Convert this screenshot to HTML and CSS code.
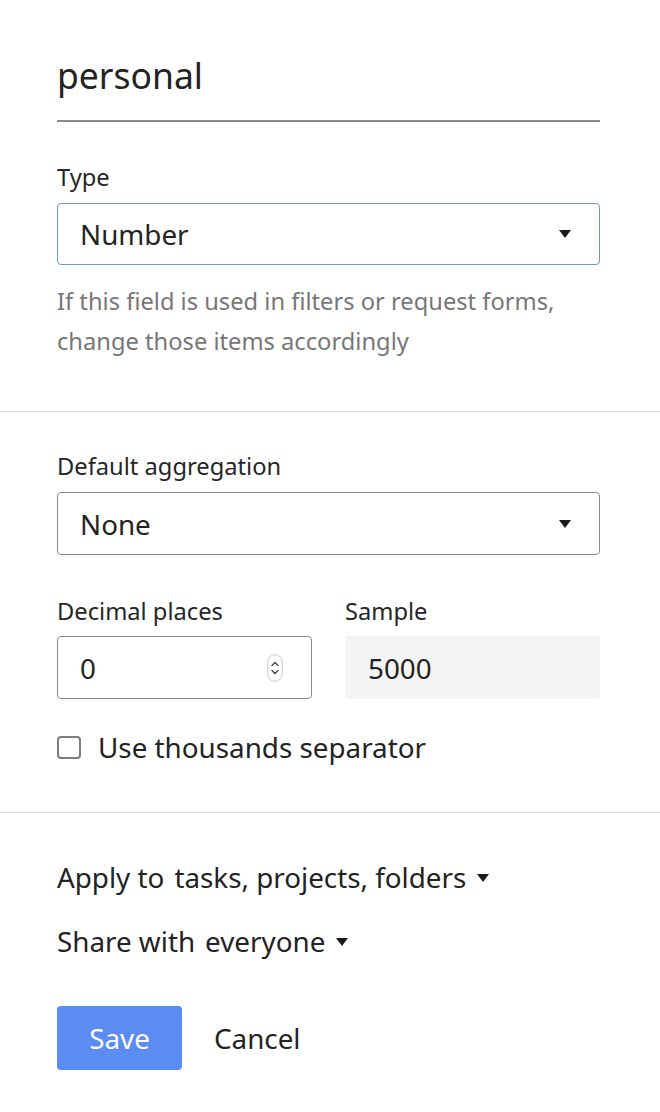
FILE: index.html
```html
<!DOCTYPE html>
<html lang="en">
<head>
<meta charset="utf-8">
<title>Field settings</title>
<link rel="stylesheet" href="styles.css">
</head>
<body>
<div class="panel">
  <div class="head">
    <h1 class="title">personal</h1>
  </div>

  <section class="sec sec-type">
    <div class="lbl">Type</div>
    <div class="select select-focus">
      <span class="select-val">Number</span>
      <span class="caret"></span>
    </div>
    <p class="help">If this field is used in filters or request forms,<br>change those items accordingly</p>
  </section>

  <section class="sec sec-num">
    <div class="lbl">Default aggregation</div>
    <div class="select">
      <span class="select-val">None</span>
      <span class="caret"></span>
    </div>
    <div class="pair">
      <div class="col">
        <div class="lbl">Decimal places</div>
        <div class="numbox">
          <span class="select-val">0</span>
          <svg class="spin" width="16" height="28" viewBox="0 0 16 28">
            <rect x="0.75" y="0.75" width="14.5" height="26.5" rx="7.25" fill="#fff" stroke="#c8c8c8" stroke-width="1"/>
            <path d="M5 11.5 L8 8.5 L11 11.5" fill="none" stroke="#444" stroke-width="1.4" stroke-linecap="round" stroke-linejoin="round"/>
            <path d="M5 16.5 L8 19.5 L11 16.5" fill="none" stroke="#444" stroke-width="1.4" stroke-linecap="round" stroke-linejoin="round"/>
          </svg>
        </div>
      </div>
      <div class="col">
        <div class="lbl">Sample</div>
        <div class="sample"><span class="select-val">5000</span></div>
      </div>
    </div>
    <div class="check-row">
      <span class="checkbox"></span>
      <span class="check-text">Use thousands separator</span>
    </div>
  </section>

  <section class="sec sec-share">
    <div class="drop-row">
      <span>Apply to</span><span class="drop-val">tasks, projects, folders</span><span class="caret caret-inline"></span>
    </div>
    <div class="drop-row drop-row2">
      <span>Share with</span><span class="drop-val">everyone</span><span class="caret caret-inline"></span>
    </div>
    <div class="actions">
      <button class="btn-save" type="button">Save</button>
      <button class="btn-cancel" type="button">Cancel</button>
    </div>
  </section>
</div>
</body>
</html>
```

FILE: styles.css
```css
* { box-sizing: border-box; }
html, body { margin: 0; padding: 0; background: #fff; }
body {
  font-family: "Noto Sans", "Open Sans", sans-serif;
  color: #222;
  width: 660px;
}
.panel { width: 660px; }

.head {
  margin: 0 60px 0 57px;
  padding: 51px 0 21px;
  border-bottom: 2px solid #8a8a8a;
}
.title {
  margin: 0;
  font-size: 35.5px;
  line-height: 48px;
  font-weight: 400;
  color: #232323;
}

.sec { padding: 0 60px 0 57px; }
.sec-type { padding-top: 39px; padding-bottom: 50px; }
.sec-num { border-top: 1px solid #dcdcdc; padding-top: 38px; padding-bottom: 47px; }
.sec-share { border-top: 1px solid #dcdcdc; padding-top: 46px; padding-bottom: 42px; }

.lbl {
  font-size: 23.7px;
  line-height: 32px;
  color: #262626;
  margin-bottom: 10px;
}

.select, .numbox, .sample {
  height: 63px;
  border: 1.5px solid #8a8a8a;
  border-radius: 4px;
  display: flex;
  align-items: center;
  justify-content: space-between;
  padding: 0 28px 0 22px;
}
.select-focus { border-color: #6c96d9; height: 62px; }
.select-val {
  font-size: 27.8px;
  line-height: 36px;
  color: #232323;
}
.caret {
  width: 0; height: 0;
  border-left: 6px solid transparent;
  border-right: 6px solid transparent;
  border-top: 8px solid #1a1a1a;
}

.help {
  margin: 16px 0 0;
  font-size: 23.7px;
  line-height: 40px;
  color: #777;
}

.pair {
  display: grid;
  grid-template-columns: 1fr 1fr;
  column-gap: 33px;
  margin-top: 40px;
}
.pair .lbl { margin-bottom: 9px; }
.numbox { padding-right: 28px; }
.spin { display: block; }
.sample {
  border: none;
  background: #f4f4f4;
  border-radius: 3px;
  padding-left: 23px;
}

.check-row {
  display: flex;
  align-items: center;
  margin-top: 30px;
  height: 36px;
}
.checkbox {
  width: 24px; height: 23px;
  border: 2px solid #7d7d7d;
  border-radius: 4px;
  margin-right: 17px;
  flex: none;
}
.check-text { font-size: 27.8px; line-height: 36px; color: #232323; }

.drop-row {
  display: flex;
  align-items: center;
  font-size: 27.8px;
  line-height: 36px;
  color: #232323;
}
.drop-val { margin-left: 10px; }
.caret-inline { margin-left: 11px; margin-top: 2px; }
.drop-row2 { margin-top: 28px; }

.actions {
  display: flex;
  align-items: center;
  margin-top: 47px;
}
.btn-save {
  width: 125px;
  height: 64px;
  border: none;
  border-radius: 4px;
  background: #5a8cf2;
  color: #fff;
  font-family: inherit;
  font-size: 27.8px;
  padding: 0;
}
.btn-cancel {
  border: none;
  background: none;
  padding: 0;
  margin-left: 32px;
  font-family: inherit;
  font-size: 27.8px;
  color: #232323;
}
```
